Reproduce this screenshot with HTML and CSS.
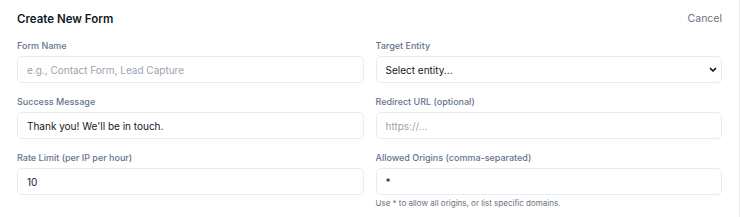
FILE: index.html
```html
<!DOCTYPE html>
<html lang="en">
<head>
    <meta charset="UTF-8">
    <title>Create New Form</title>
    <link rel="stylesheet" href="styles.css">
</head>
<body>
    <div class="card">
        <div class="card-header">
            <h2>Create New Form</h2>
            <button class="cancel-btn">Cancel</button>
        </div>

        <div class="form-grid">
            <div class="field">
                <label>Form Name</label>
                <input type="text" class="input" placeholder="e.g., Contact Form, Lead Capture">
            </div>
            <div class="field">
                <label>Target Entity</label>
                <div class="select-wrap">
                    <select class="input select">
                        <option>Select entity...</option>
                    </select>
                    <svg class="chevron" width="10" height="10" viewBox="0 0 10 10">
                        <path d="M2.5 3.5 L5 6 L7.5 3.5" fill="none" stroke="#111" stroke-width="1.7" stroke-linecap="round" stroke-linejoin="round"/>
                    </svg>
                </div>
            </div>

            <div class="field">
                <label>Success Message</label>
                <input type="text" class="input" value="Thank you! We'll be in touch.">
            </div>
            <div class="field">
                <label>Redirect URL (optional)</label>
                <input type="text" class="input" placeholder="https://...">
            </div>

            <div class="field">
                <label>Rate Limit (per IP per hour)</label>
                <input type="text" class="input" value="10">
            </div>
            <div class="field">
                <label>Allowed Origins (comma-separated)</label>
                <input type="text" class="input" value="*">
                <p class="help">Use * to allow all origins, or list specific domains.</p>
            </div>
        </div>
    </div>
</body>
</html>
```

FILE: styles.css
```css
* {
    box-sizing: border-box;
}

body {
    margin: 0;
    font-family: 'Inter', 'Noto Sans', sans-serif;
    background: #ffffff;
    color: #111827;
}

.card {
    width: 740px;
    height: 217px;
    border-right: 1px solid #e5e7eb;
    padding: 10px 17px 0 17px;
}

.card-header {
    display: flex;
    justify-content: space-between;
    align-items: center;
    height: 17px;
    margin-bottom: 13px;
}

.card-header h2 {
    margin: 0;
    font-size: 11.5px;
    font-weight: 600;
    color: #111827;
}

.cancel-btn {
    border: none;
    background: none;
    padding: 0;
    font-family: inherit;
    font-size: 10.5px;
    color: #6b7280;
    cursor: pointer;
}

.form-grid {
    display: grid;
    grid-template-columns: 1fr 1fr;
    column-gap: 12px;
    row-gap: 13px;
}

.field label {
    display: block;
    font-size: 9px;
    font-weight: 500;
    color: #64748b;
    line-height: 12px;
    margin-bottom: 4px;
}

.input {
    display: block;
    width: 100%;
    height: 27px;
    padding: 0 9px;
    border: 1px solid #e9ebef;
    border-radius: 5px;
    background: #ffffff;
    font-family: inherit;
    font-size: 10px;
    color: #111827;
}

.input::placeholder {
    color: #9ca3af;
}

.select-wrap {
    position: relative;
}

.select {
    appearance: none;
    -webkit-appearance: none;
}

.chevron {
    position: absolute;
    right: 4px;
    top: 9px;
}

.help {
    margin: 3px 0 0 0;
    font-size: 8px;
    line-height: 10px;
    color: #6b7280;
}
```
